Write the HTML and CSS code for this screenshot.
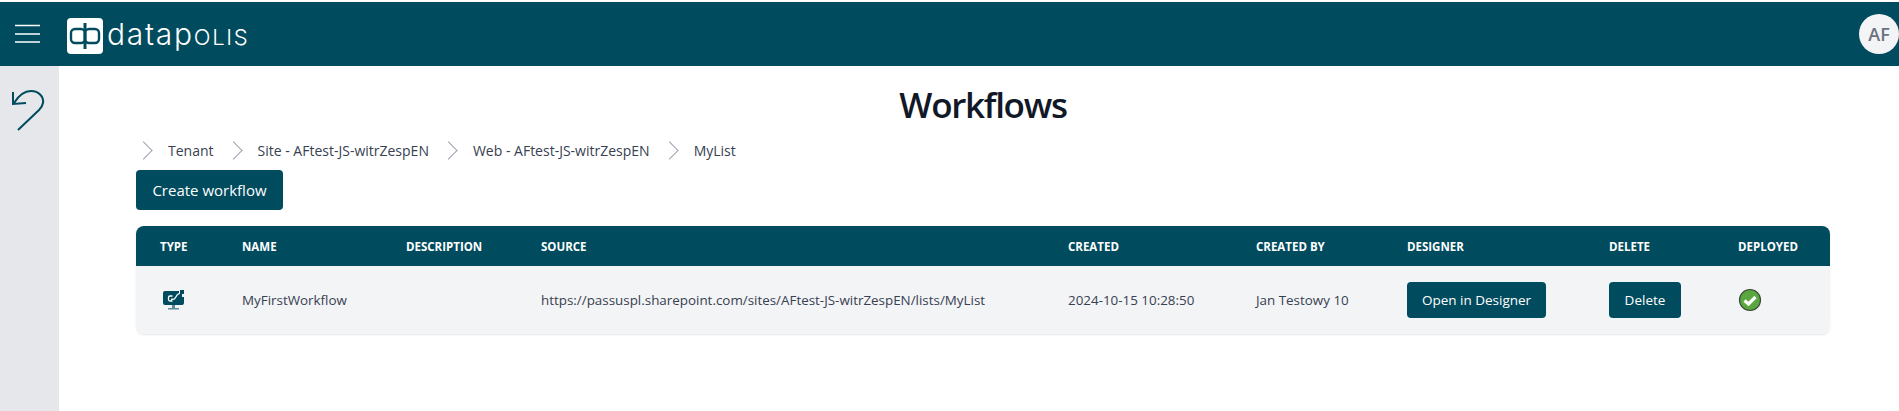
FILE: index.html
```html
<!DOCTYPE html>
<html lang="en">
<head>
<meta charset="utf-8">
<title>Workflows</title>
<link rel="stylesheet" href="styles.css">
</head>
<body>
<header class="topbar">
  <button class="menu-btn" aria-label="Menu">
    <svg width="26" height="20" viewBox="0 0 26 20"><path d="M0 1.5h25M0 10h25M0 18h25" stroke="#fff" stroke-width="1.7" fill="none"/></svg>
  </button>
  <div class="logo">
    <span class="logo-box">
      <svg width="36" height="36" viewBox="0 0 36 36"><rect width="36" height="36" rx="4" fill="#fff"/><rect x="4" y="11" width="14" height="14" rx="4" fill="none" stroke="#004b5e" stroke-width="2.4"/><rect x="18" y="11" width="14" height="14" rx="4" fill="none" stroke="#004b5e" stroke-width="2.4"/><path d="M18 5v26" stroke="#004b5e" stroke-width="3"/></svg>
    </span>
    <span class="logo-text">datap<span class="logo-caps">olis</span></span>
  </div>
  <div class="avatar">AF</div>
</header>
<div class="layout">
  <aside class="sidebar">
    <svg width="36" height="42" viewBox="0 0 36 42"><path d="M2 3v12l13-1M3 14C8 6 14 2 20 2c8 0 13 6 12 12-.5 3-2 5-4 7L7 41" fill="none" stroke="#004b5e" stroke-width="2"/></svg>
  </aside>
  <main class="content">
    <h1 class="title">Workflows</h1>
    <nav class="crumbs">
      <span class="crumb">Tenant</span>
      <span class="crumb">Site - AFtest-JS-witrZespEN</span>
      <span class="crumb">Web - AFtest-JS-witrZespEN</span>
      <span class="crumb">MyList</span>
    </nav>
    <button class="btn btn-create">Create workflow</button>
    <table class="grid">
      <thead>
        <tr>
          <th class="c-type">Type</th>
          <th class="c-name">Name</th>
          <th class="c-desc">Description</th>
          <th class="c-src">Source</th>
          <th class="c-created">Created</th>
          <th class="c-by">Created by</th>
          <th class="c-designer">Designer</th>
          <th class="c-delete">Delete</th>
          <th class="c-deployed">Deployed</th>
        </tr>
      </thead>
      <tbody>
        <tr>
          <td class="type-cell">
            <svg width="21" height="20" viewBox="0 0 21 20"><path d="M2 1h14v3h3v3h2v6a2 2 0 0 1-2 2H2a2 2 0 0 1-2-2V3a2 2 0 0 1 2-2z" fill="#004b5e"/><path d="M17 0h4v4h-4z" fill="#004b5e"/><path d="M9.500 6H7a1.500 1.500 0 0 0-1.500 1.500v2A1.500 1.500 0 0 0 7 11h2.500M8 9.500l3.500-.5 3-4.500 2-1" stroke="#fff" stroke-width="1.300" fill="none"/><path d="M9 15h3v3H9zM5 18h11v1.500H5z" fill="#5d8a98"/></svg>
          </td>
          <td>MyFirstWorkflow</td>
          <td></td>
          <td>https://passuspl.sharepoint.com/sites/AFtest-JS-witrZespEN/lists/MyList</td>
          <td>2024-10-15 10:28:50</td>
          <td>Jan Testowy 10</td>
          <td><button class="btn btn-row btn-open">Open in Designer</button></td>
          <td><button class="btn btn-row btn-delete">Delete</button></td>
          <td class="ok-cell">
            <svg width="24" height="24" viewBox="0 0 24 24"><circle cx="12" cy="12" r="10.500" fill="#5aa63f" stroke="#3b4a3a" stroke-width="1.200"/><path d="M6.500 12.500l4 3.500 7-7" fill="none" stroke="#fff" stroke-width="3.200"/></svg>
          </td>
        </tr>
      </tbody>
    </table>
  </main>
</div>
</body>
</html>
```
FILE: styles.css
```css
* { box-sizing: border-box; }
html, body { height: 100%; }
body {
  margin: 0;
  padding-top: 2px;
  background: #fff;
  font-family: "Open Sans", "Noto Sans", "Liberation Sans", sans-serif;
  font-size: 13.4px;
  color: #374151;
  overflow: hidden;
  display: flex;
  flex-direction: column;
}
.topbar {
  height: 64px;
  flex: none;
  background: #004b5e;
  display: flex;
  align-items: center;
  padding-left: 15px;
}
.menu-btn {
  border: 0;
  padding: 0;
  background: none;
  width: 26px;
  height: 20px;
  display: block;
}
.menu-btn svg { display: block; }
.logo {
  display: flex;
  align-items: center;
  margin-left: 26px;
  margin-top: 3px;
}
.logo-box { width: 36px; height: 36px; display: block; }
.logo-box svg { display: block; }
.logo-text {
  margin-left: 4px;
  font-family: "Inter", sans-serif;
  font-weight: 300;
  font-size: 30px;
  letter-spacing: 1.7px;
  line-height: 36px;
  color: #fff;
}
.logo-caps {
  text-transform: uppercase;
  font-size: 22px;
}
.avatar {
  margin-left: auto;
  width: 40px;
  height: 40px;
  border-radius: 50%;
  background: #f3f4f6;
  color: #6b7280;
  font-size: 18px;
  font-weight: 600;
  display: flex;
  align-items: center;
  justify-content: center;
}
.layout { flex: 1; display: flex; min-height: 0; }
.sidebar {
  width: 59px;
  flex: none;
  background: #e5e7eb;
  padding: 23px 0 0 11px;
}
.sidebar svg { display: block; }
.content {
  flex: 1;
  min-width: 0;
  padding: 15px 69px 0 77px;
}
.title {
  margin: 0;
  text-align: center;
  font-size: 35px;
  line-height: 48px;
  font-weight: 600;
  color: #111827;
  letter-spacing: -1.3px;
}
.crumbs {
  display: flex;
  height: 20px;
  margin: 11px 0 0 1px;
  align-items: center;
  font-size: 14px;
  font-weight: 500;
}
.crumb { display: flex; align-items: center; }
.crumb::before {
  content: "";
  width: 12px;
  height: 12px;
  border-top: 1.5px solid #9ca3af;
  border-right: 1.5px solid #9ca3af;
  transform: rotate(45deg);
  margin-right: 18px;
}
.crumb + .crumb { margin-left: 13px; }
.btn {
  border: 0;
  background: #004b5e;
  color: #fff;
  font-family: inherit;
  border-radius: 4px;
  display: block;
}
.btn-create {
  margin-top: 10px;
  width: 147px;
  height: 40px;
  font-size: 15px;
}
.grid {
  width: 1694px;
  margin-top: 16px;
  table-layout: fixed;
  border-collapse: separate;
  border-spacing: 0;
  box-shadow: 0 1px 2px rgba(0, 0, 0, .1);
  border-radius: 8px;
}
.grid th {
  height: 40px;
  background: #004b5e;
  color: #fff;
  font-size: 11.5px;
  font-weight: 700;
  text-transform: uppercase;
  text-align: left;
  padding: 0 0 0 24px;
}
.grid th:first-child { border-top-left-radius: 8px; }
.grid th:last-child { border-top-right-radius: 8px; }
.grid td {
  height: 68px;
  background: #f3f4f6;
  padding: 0 0 0 24px;
  white-space: nowrap;
}
.grid td.type-cell { padding-left: 27px; }
.grid td:first-child { border-bottom-left-radius: 8px; }
.grid td:last-child { border-bottom-right-radius: 8px; }
.grid svg { display: block; }
.c-type { width: 82px; }
.c-name { width: 164px; }
.c-desc { width: 135px; }
.c-src { width: 527px; }
.c-created { width: 188px; }
.c-by { width: 151px; }
.c-designer { width: 202px; }
.c-delete { width: 129px; }
.c-deployed { width: 116px; }
.btn-row { height: 36px; font-size: 13.5px; }
.btn-open { width: 139px; }
.btn-delete { width: 72px; }
```
